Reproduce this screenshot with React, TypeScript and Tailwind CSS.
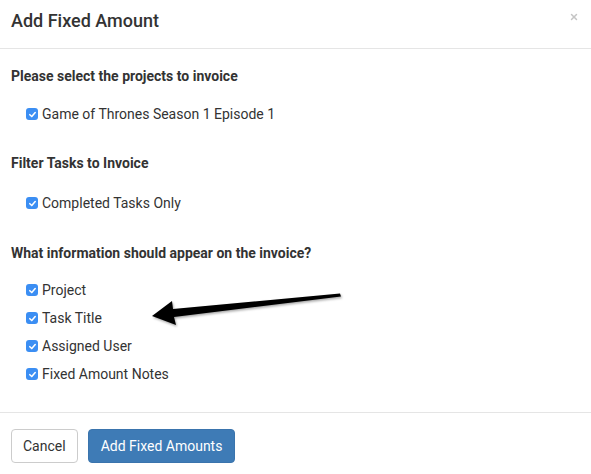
import { X } from "lucide-react";

const Check = ({ label }: { label: string }) => (
  <label className="flex items-center gap-[4px] h-[28px] text-[14px] text-[#333]">
    <span className="w-[12px] h-[12px] rounded-[3px] bg-[#3b8ef3] flex items-center justify-center">
      <svg width="9" height="9" viewBox="0 0 10 10">
        <path d="M2 5.2 L4.2 7.3 L8 2.8" stroke="#fff" strokeWidth="1.7" fill="none" strokeLinecap="round" strokeLinejoin="round" />
      </svg>
    </span>
    {label}
  </label>
);

const Heading = ({ children }: { children: string }) => (
  <h4 className="text-[14px] font-bold text-[#333] leading-[18px]">{children}</h4>
);

export default function App() {
  return (
    <div className="w-[591px] h-[474px] bg-white font-['Roboto',sans-serif] text-[#333] flex flex-col">
      {/* header */}
      <div className="h-[49px] border-b border-[#e5e5e5] flex items-center justify-between pl-[11px] pr-[12px]">
        <h3 className="text-[18px] leading-[24px] -mt-[6px] font-medium text-[#333]">Add Fixed Amount</h3>
        <X className="w-[10px] h-[10px] text-[#c5c5c5] -mt-[15px]" strokeWidth={3.5} />
      </div>

      {/* body */}
      <div className="relative flex-1 pl-[11px] pt-[18px]">
        <Heading>Please select the projects to invoice</Heading>
        <div className="pl-[15px] mt-[15px]">
          <Check label="Game of Thrones Season 1 Episode 1" />
        </div>

        <div className="mt-[26px]">
          <Heading>Filter Tasks to Invoice</Heading>
        </div>
        <div className="pl-[15px] mt-[17px]">
          <Check label="Completed Tasks Only" />
        </div>

        <div className="mt-[27px]">
          <Heading>What information should appear on the invoice?</Heading>
        </div>
        <div className="pl-[15px] mt-[14px] flex flex-col">
          <Check label="Project" />
          <Check label="Task Title" />
          <Check label="Assigned User" />
          <Check label="Fixed Amount Notes" />
        </div>

        {/* annotation arrow */}
        <svg className="absolute left-[148px] top-[240px]" width="200" height="40" viewBox="0 0 200 40">
          <defs>
            <filter id="sh" x="-10%" y="-50%" width="120%" height="200%">
              <feDropShadow dx="1" dy="1.5" stdDeviation="1" floodColor="#000" floodOpacity="0.35" />
            </filter>
          </defs>
          <path
            d="M192 4.5 L193 7.5 L26 28 L28 36 L4 27 L24 12 L25 20 Z"
            fill="#000"
            filter="url(#sh)"
          />
        </svg>
      </div>

      {/* footer */}
      <div className="h-[62px] border-t border-[#e5e5e5] flex items-center gap-[10px] pl-[11px] pt-[5px]">
        <button className="h-[34px] px-[11px] rounded-[4px] border border-[#ccc] bg-white text-[14px] text-[#333]">
          Cancel
        </button>
        <button className="h-[34px] px-[12px] rounded-[4px] border border-[#3a74ad] bg-[#3e7bb6] text-[14px] text-white">
          Add Fixed Amounts
        </button>
      </div>
    </div>
  );
}
